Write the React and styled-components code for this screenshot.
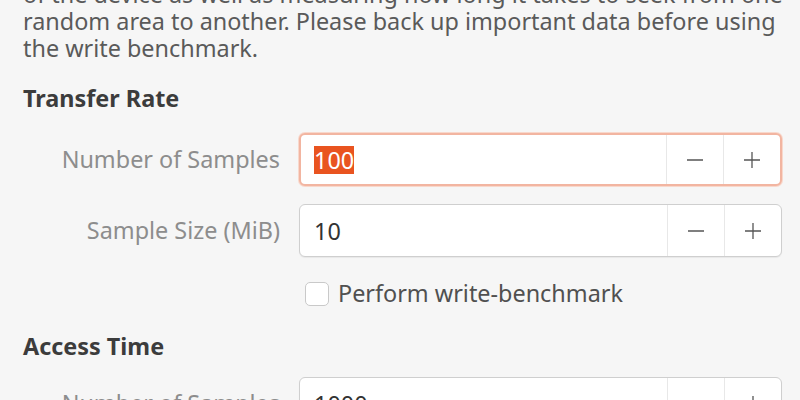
import React from "react";
import styled, { createGlobalStyle } from "styled-components";

const Global = createGlobalStyle`
  html, body { margin: 0; padding: 0; background: #f6f6f6; overflow: hidden; }
  body { font-family: "Noto Sans", "Open Sans", sans-serif; }
`;

const Page = styled.div`
  width: 800px;
  height: 400px;
  overflow: hidden;
  background: #f6f6f6;
  box-sizing: border-box;
  padding: 0 18px 0 23px;
`;

const Content = styled.div`
  margin-top: -19px;
  display: flex;
  flex-direction: column;
`;

const Paragraph = styled.div`
  font-size: 23.4px;
  line-height: 27px;
  color: #5a5a5a;
`;

const Line = styled.div`
  white-space: nowrap;
`;

const Heading = styled.div`
  margin-top: ${p => p.$gap}px;
  font-size: 23.4px;
  line-height: 27px;
  font-weight: 700;
  color: #3c3c3c;
`;

const Grid = styled.div`
  margin-top: ${p => p.$gap}px;
  display: grid;
  grid-template-columns: 257px 1fr;
  column-gap: 19px;
  row-gap: 18px;
  align-items: center;
`;

const Label = styled.div`
  text-align: right;
  font-size: 23.4px;
  line-height: 27px;
  color: #8d8d8d;
  white-space: nowrap;
`;

const Spin = styled.div`
  display: flex;
  box-sizing: border-box;
  height: 53px;
  background: #fff;
  border-radius: 6px;
  border: ${p => (p.$focused ? "2px solid #f2b5a1" : "1px solid #cfcfcf")};
  box-shadow: ${p => (p.$focused ? "0 0 0 1px #f8d8cc" : "0 1px 1px rgba(0,0,0,0.06)")};
  overflow: hidden;
`;

const Entry = styled.div`
  flex: 1;
  display: flex;
  align-items: center;
  padding-left: ${p => (p.$focused ? 13 : 14)}px;
  font-size: 23.4px;
  color: #333;
`;

const Selected = styled.span`
  background: #e95420;
  color: #fff;
  line-height: 28px;
`;

const StepButton = styled.div`
  width: 56px;
  display: flex;
  align-items: center;
  justify-content: center;
  border-left: 1px solid #e8e8e8;
  color: #555;
`;

const CheckRow = styled.label`
  grid-column: 2;
  display: flex;
  align-items: center;
  gap: 9px;
  padding-left: 6px;
  margin-top: 5px;
  font-size: 23.4px;
  line-height: 27px;
  color: #505050;
`;

const Box = styled.span`
  box-sizing: border-box;
  width: 24px;
  height: 24px;
  border: 1px solid #c9c9c9;
  border-radius: 5px;
  background: #fff;
`;

const Minus = () => (
  <svg width="18" height="18" viewBox="0 0 18 18">
    <path d="M1 9h16" stroke="#555" strokeWidth="1.3" />
  </svg>
);
const Plus = () => (
  <svg width="18" height="18" viewBox="0 0 18 18">
    <path d="M1 9h16M9 1v16" stroke="#555" strokeWidth="1.3" />
  </svg>
);

const SpinField = ({ focused, children }) => (
  <Spin $focused={focused}>
    <Entry $focused={focused}>{children}</Entry>
    <StepButton><Minus /></StepButton>
    <StepButton><Plus /></StepButton>
  </Spin>
);

export default function App() {
  return (
    <>
      <Global />
      <Page>
        <Content>
          <Paragraph>
            <Line>of the device as well as measuring how long it takes to seek from one</Line>
            <Line>random area to another. Please back up important data before using</Line>
            <Line>the write benchmark.</Line>
          </Paragraph>
          <Heading $gap={23}>Transfer Rate</Heading>
          <Grid $gap={21}>
            <Label>Number of Samples</Label>
            <SpinField focused><Selected>100</Selected></SpinField>
            <Label>Sample Size (MiB)</Label>
            <SpinField>10</SpinField>
            <CheckRow><Box />Perform write-benchmark</CheckRow>
          </Grid>
          <Heading $gap={26}>Access Time</Heading>
          <Grid $gap={17}>
            <Label>Number of Samples</Label>
            <SpinField>1000</SpinField>
          </Grid>
        </Content>
      </Page>
    </>
  );
}
